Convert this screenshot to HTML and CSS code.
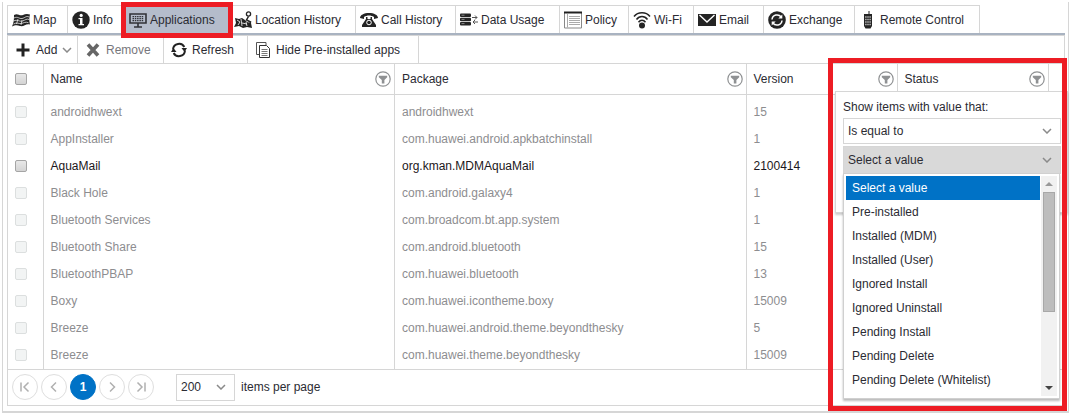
FILE: index.html
```html
<!DOCTYPE html>
<html lang="en">
<head>
<meta charset="utf-8">
<title>Applications</title>
<link rel="stylesheet" href="styles.css">
</head>
<body>
<svg class="sprite" aria-hidden="true">
  <symbol id="chevron" viewBox="0 0 10 6"><path d="M1 1l4 4 4-4" fill="none" stroke="currentColor" stroke-width="1.5"/></symbol>
  <symbol id="filter" viewBox="0 0 16 16"><circle cx="8" cy="8" r="7.2" fill="#fff" stroke="#8f9193" stroke-width="1.2"/><path d="M3.8 4.8h8.4v1.4L9.4 9v3.4H6.8V9l-3-2.8z" fill="#8f9193"/></symbol>
</svg>
<main class="panel">
  <nav class="tabs" aria-label="Device sections">
    <button class="tab"><svg class="icon" viewBox="0 0 18 18"><path d="M2 4c4-2.500 5 1.500 9 0 2-1 4-1.500 7-.5-1 3-1 6 0 10-4-1.500-6 2.500-10 1.500-3-1-5-1-8 .5 2-4 2-8 2-11.500z" fill="#242424"/><path d="M2 7c4-2 5 1 8 .5s4-3 7-1.500M1.500 10c4-2 6 1 9 0s4-2.500 6.500-1.500M1.500 13c3-2 6 0 8-.5s4-2 7-.8M6 8l-1.500 5M10 9l-1 5" fill="none" stroke="#fff" stroke-width=".7"/></svg>Map</button>
    <button class="tab"><svg class="icon" viewBox="0 0 18 18"><circle cx="9" cy="9" r="8.7" fill="#242424"/><circle cx="9.2" cy="4.4" r="1.6" fill="#fff"/><path d="M6.5 7h4v6H12v1.3H6.5V13H8V8.200H6.500z" fill="#fff"/></svg>Info</button>
    <button class="tab tab-active" aria-current="page"><svg class="icon" viewBox="0 0 18 18"><path d="M1 3h16v9H1zM9 12v4M5 16h8" fill="none" stroke="#303238" stroke-width="1.6"/><path d="M3.500 5.700h11M3.500 7.700h11M3.500 9.700h11" stroke="#303238" stroke-width="1.300" stroke-dasharray="1.500 .8"/></svg>Applications<span class="mark mark-tab"></span></button>
    <button class="tab"><svg class="icon" viewBox="0 0 18 18"><path d="M1 7l4 1 3-1 3 2 2 2 4 1 1 5-5-1-4 1-4-2-5 1 2-4z" fill="#242424"/><path d="M3 9l3 2-2 3M7 8l1 7M8 12l5 1M12 11l1 4" fill="none" stroke="#fff" stroke-width=".8"/><path d="M14.500 5.500L12.500 9l4 2-1 3" fill="none" stroke="#242424" stroke-width="1.500"/><circle cx="14.500" cy="3" r="2.100" fill="#fff" stroke="#242424" stroke-width="1.300"/></svg>Location History</button>
    <button class="tab"><svg class="icon" viewBox="0 0 18 18"><path d="M0 7c0-3 4-5 9-5s9 2 9 5l-4 1V6C11 4 7 4 4 6v2zM6 6h1.500v2h3V6H12v2l4 6v2H2v-2l4-6z" fill="#242424"/><circle cx="9" cy="11.500" r="2.300" fill="none" stroke="#fff"/></svg>Call History</button>
    <button class="tab"><svg class="icon" viewBox="0 0 18 18"><g fill="#242424"><rect y="2.500" width="11" height="3.500" rx="1"/><rect y="6.700" width="11" height="3.500" rx="1"/><rect y="10.900" width="11" height="3.500" rx="1"/></g><path d="M1.500 4.200h3m-3 4.200h3m-3 4.200h3" stroke="#888"/><path d="M12 6.500h5M15 4.500l2 2-2 2M18 11h-5M15 9l-2 2 2 2" fill="none" stroke="#555"/></svg>Data Usage</button>
    <button class="tab"><svg class="icon" viewBox="0 0 18 18"><path d="M.5 2v15h17V2" fill="#fff" stroke="#888"/><path d="M0 1.500h18" stroke="#202020" stroke-width="2"/><path d="M3.500 3v13.500M5 5.500h11M5 7.500h11M5 9.500h11M5 11.500h11M5 13.500h11" stroke="#aaa"/></svg>Policy</button>
    <button class="tab"><svg class="icon" viewBox="0 0 18 18"><path d="M1 5.500c4-5 12-5 16 0M3.500 8.500c3-4 8-4 11 0M5.500 11.300c2-2.600 5-2.600 7 0" fill="none" stroke="#242424" stroke-width="1.500"/><circle cx="9" cy="14.500" r="3" fill="#242424"/></svg>Wi-Fi</button>
    <button class="tab"><svg class="icon" viewBox="0 0 18 18"><path d="M0 3h18v12H0z" fill="#242424"/><path d="M1.500 4L9 11l7.500-7" fill="none" stroke="#fff" stroke-width="1.400"/></svg>Email</button>
    <button class="tab"><svg class="icon" viewBox="0 0 18 18"><circle cx="9" cy="9" r="8.800" fill="#242424"/><path d="M4 8.500c.5-5 6.500-6 9.200-2.500M14 9.500c-.5 5-6.500 6-9.200 2.500" fill="none" stroke="#fff" stroke-width="1.500"/><path d="M14.300 3.500v4h-4zM3.700 14.500v-4h4z" fill="#fff"/></svg>Exchange</button>
    <button class="tab"><svg class="icon" viewBox="0 0 18 18"><path d="M9.500 0h1v3h2.500v12l-1.500 2.500h-5L5 15V3h4.500z" fill="#242424"/><path d="M6.300 6h5.400M6.300 8.500h5.400M6.300 11h5.400M6.300 13.500h5.400" stroke="#ddd" stroke-width="1.300" stroke-dasharray="1.200 .9"/></svg>Remote Control</button>
  </nav>

  <section class="grid">
    <div class="toolbar">
      <button class="tool"><svg class="tool-icon" viewBox="0 0 16 16"><path d="M8 1.500v13M1.500 8h13" stroke="#222" stroke-width="3"/></svg>Add<svg class="chevron"><use href="#chevron"/></svg></button>
      <button class="tool" disabled><svg class="tool-icon" viewBox="0 0 16 16"><path d="M3 2.500l10 11M13 2.500l-10 11" stroke="#666" stroke-width="3.600"/></svg>Remove</button>
      <button class="tool"><svg class="tool-icon" viewBox="0 0 16 16"><path d="M2 7.500C2.500 1 11 0 13.300 5M14 8.500C13.500 15 5 16 2.700 11" fill="none" stroke="#222" stroke-width="2"/><path d="M16 6h-5.500l3 4zM0 10h5.500l-3-4z" fill="#222"/></svg>Refresh</button>
      <button class="tool"><svg class="tool-icon" viewBox="0 0 16 16"><path d="M11 3V.5H1.500v12H4" fill="#fff" stroke="#555"/><path d="M4.500 3.500h7l3 3v9h-10z" fill="#fff" stroke="#333"/><path d="M6.500 7.500h6M6.500 9.500h6M6.500 11.500h6M6.500 13.500h6" stroke="#777"/></svg>Hide Pre-installed apps</button>
    </div>

    <table class="apps">
      <colgroup><col class="col-check"><col><col><col class="col-short"><col class="col-short"><col class="col-end"></colgroup>
      <thead>
        <tr>
          <th><input type="checkbox" aria-label="Select all"></th>
          <th><div class="head">Name<button class="filter" aria-label="Filter name"><svg><use href="#filter"/></svg></button></div></th>
          <th><div class="head">Package<button class="filter" aria-label="Filter package"><svg><use href="#filter"/></svg></button></div></th>
          <th><div class="head">Version<button class="filter" aria-label="Filter version"><svg><use href="#filter"/></svg></button></div></th>
          <th><div class="head">Status<button class="filter" aria-label="Filter status"><svg><use href="#filter"/></svg></button></div></th>
          <th></th>
        </tr>
      </thead>
      <tbody>
        <tr class="spacer"><td></td><td></td><td></td><td></td><td></td><td></td></tr>
        <tr><td><input type="checkbox" disabled aria-label="androidhwext"></td><td>androidhwext</td><td>androidhwext</td><td>15</td><td></td><td></td></tr>
        <tr><td><input type="checkbox" disabled aria-label="AppInstaller"></td><td>AppInstaller</td><td>com.huawei.android.apkbatchinstall</td><td>1</td><td></td><td></td></tr>
        <tr class="enabled"><td><input type="checkbox" aria-label="AquaMail"></td><td>AquaMail</td><td>org.kman.MDMAquaMail</td><td>2100414</td><td></td><td></td></tr>
        <tr><td><input type="checkbox" disabled aria-label="Black Hole"></td><td>Black Hole</td><td>com.android.galaxy4</td><td>1</td><td></td><td></td></tr>
        <tr><td><input type="checkbox" disabled aria-label="Bluetooth Services"></td><td>Bluetooth Services</td><td>com.broadcom.bt.app.system</td><td>1</td><td></td><td></td></tr>
        <tr><td><input type="checkbox" disabled aria-label="Bluetooth Share"></td><td>Bluetooth Share</td><td>com.android.bluetooth</td><td>15</td><td></td><td></td></tr>
        <tr><td><input type="checkbox" disabled aria-label="BluetoothPBAP"></td><td>BluetoothPBAP</td><td>com.huawei.bluetooth</td><td>13</td><td></td><td></td></tr>
        <tr><td><input type="checkbox" disabled aria-label="Boxy"></td><td>Boxy</td><td>com.huawei.icontheme.boxy</td><td>15009</td><td></td><td></td></tr>
        <tr><td><input type="checkbox" disabled aria-label="Breeze"></td><td>Breeze</td><td>com.huawei.android.theme.beyondthesky</td><td>5</td><td></td><td></td></tr>
        <tr><td><input type="checkbox" disabled aria-label="Breeze theme"></td><td>Breeze</td><td>com.huawei.theme.beyondthesky</td><td>15009</td><td></td><td></td></tr>
      </tbody>
    </table>

    <div class="pager">
      <button class="page" aria-label="First page"><svg viewBox="0 0 12 12"><path d="M2 1.500v9M9.500 1.500L5 6l4.500 4.500"/></svg></button>
      <button class="page" aria-label="Previous page"><svg viewBox="0 0 12 12"><path d="M8 1.500L3.500 6 8 10.500"/></svg></button>
      <button class="page page-current" aria-current="page">1</button>
      <button class="page" aria-label="Next page"><svg viewBox="0 0 12 12"><path d="M4 1.500L8.500 6 4 10.500"/></svg></button>
      <button class="page" aria-label="Last page"><svg viewBox="0 0 12 12"><path d="M2.500 1.500L7 6l-4.500 4.500M10 1.500v9"/></svg></button>
      <div class="picker picker-size"><select id="page-size"><option>200</option></select><svg class="chevron"><use href="#chevron"/></svg></div>
      <label for="page-size">items per page</label>
    </div>

    <form class="popup" aria-label="Status filter">
      <label class="popup-label" for="operator">Show items with value that:</label>
      <div class="picker"><select id="operator"><option>Is equal to</option></select><svg class="chevron"><use href="#chevron"/></svg></div>
      <div class="picker picker-open"><select aria-label="Value"><option>Select a value</option></select><svg class="chevron"><use href="#chevron"/></svg>
        <div class="menu">
          <ul class="options" role="listbox" aria-label="Values">
            <li class="option option-active" role="option" aria-selected="true">Select a value</li>
            <li class="option" role="option">Pre-installed</li>
            <li class="option" role="option">Installed (MDM)</li>
            <li class="option" role="option">Installed (User)</li>
            <li class="option" role="option">Ignored Install</li>
            <li class="option" role="option">Ignored Uninstall</li>
            <li class="option" role="option">Pending Install</li>
            <li class="option" role="option">Pending Delete</li>
            <li class="option" role="option">Pending Delete (Whitelist)</li>
          </ul>
          <div class="scroll"><svg class="arrow" viewBox="0 0 8 4"><path d="M0 4l4-4 4 4z" fill="#999"/></svg><div class="track"><div class="thumb"></div></div><svg class="arrow" viewBox="0 0 8 4"><path d="M0 0l4 4 4-4z" fill="#444"/></svg></div>
        </div>
      </div>
    </form>
    <span class="mark mark-filter"></span>
  </section>
</main>
</body>
</html>
```
FILE: styles.css
```css
* { box-sizing: border-box; }
body { margin: 0; padding: 2px; background: #fff; color: #2b2b33; font: 12px/16px "Liberation Sans", Arial, sans-serif; }
button, select, input { font: inherit; color: inherit; margin: 0; }
button { display: flex; align-items: center; padding: 0; border: 0; background: none; white-space: nowrap; }
svg { display: block; flex: none; }
.sprite { position: absolute; width: 0; height: 0; }

.panel { padding: 3px 3px 5px 4px; border: 1px solid #d6d6d6; border-top: 0; border-bottom: 2px solid #d6d6d6; }

.tabs { display: grid; grid-template-columns: 60px 57px 105px 126px 100px 104px 69px 65px 70px 91px 126px; justify-content: start; border-bottom: 2px solid #a9b3c1; }
.tab { position: relative; height: 28px; gap: 3px; padding-left: 4px; border: 1px solid #d6d6d6; border-width: 1px 0 0 1px; }
.tab:last-child { border-right-width: 1px; }
.tab-active { z-index: 1; background: #b4bccb; }
.icon { width: 18px; height: 18px; }

.mark { position: absolute; border: 5px solid #ed1c24; pointer-events: none; }
.mark-tab { inset: -4px -4px -5px; }
.mark-filter { inset: 22px -3px -6px auto; width: 239px; }

.grid { position: relative; border: 1px solid #d6d6d6; }
.toolbar { display: grid; grid-template-columns: 70px 86px 84px 171px; height: 27px; }
.tool { gap: 5px; padding-left: 7px; border-right: 1px solid #d6d6d6; }
.tool:disabled { color: #77777c; }
.tool-icon { width: 16px; height: 16px; }
.chevron { width: 10px; height: 6px; color: #8a8a8a; }

.apps { width: 100%; table-layout: fixed; border-collapse: collapse; color: #8d8d90; }
.col-check { width: 35px; }
.col-short { width: 151px; }
.col-end { width: 16px; }
.apps th, .apps td { height: 27px; padding: 0 7px; border-left: 1px solid #d6d6d6; text-align: left; font-weight: 400; white-space: nowrap; }
.apps th { height: 31px; border-top: 1px solid #d6d6d6; border-bottom: 1px solid #d6d6d6; color: #2b2b33; }
.apps th:first-child, .apps td:first-child { border-left: 0; }
.apps .spacer td { height: 4px; }
.enabled { color: #1c1720; }
.head { display: flex; align-items: center; justify-content: space-between; }
.filter svg { width: 16px; height: 16px; margin-right: -4px; }
input[type="checkbox"] { display: block; appearance: none; width: 12px; height: 12px; border: 1px solid #a5a5a5; border-radius: 2px; background: linear-gradient(#e8e8e8, #d4d4d4); }
input[type="checkbox"]:disabled { border-color: #dcdfdf; background: #f2f4f4; }

.pager { display: flex; align-items: center; gap: 3px; height: 36px; padding-left: 4px; border-top: 1px solid #d6d6d6; }
.page { justify-content: center; width: 26px; height: 26px; border: 1px solid #dedede; border-radius: 50%; }
.page svg { width: 12px; height: 12px; fill: none; stroke: #b0b0b0; stroke-width: 1.5; }
.page-current { border-color: #0072c6; background: #0072c6; color: #fff; font-weight: 700; }

.picker { position: relative; display: grid; grid-template-columns: 1fr auto; align-items: center; height: 26px; border: 1px solid #d6d6d6; background: #fff; }
.picker select { grid-area: 1 / 1 / 2 / 3; appearance: none; height: 100%; padding: 0 4px; border: 0; background: none; }
.picker > .chevron { grid-area: 1 / 2; margin-right: 8px; pointer-events: none; }
.picker-size { width: 59px; height: 27px; margin: 0 3px 0 19px; }

.popup { position: absolute; top: 55px; right: -4px; width: 233px; height: 122px; padding: 7px 6px 0 7px; border: 1px solid #d6d6d6; background: #fff; box-shadow: 0 2px 2px #0003; }
.popup-label { display: block; margin-bottom: 3px; }
.popup .picker { margin-bottom: 2px; }
.popup .picker-open { height: 28px; background: #d9d9d9; }
.menu { position: absolute; top: 100%; left: -1px; right: 0; display: flex; padding: 2px; border: 1px solid #d0d0d0; background: #fff; box-shadow: 0 2px 2px #0004; }
.options { flex: 1; margin: 0; padding: 0 0 4px; list-style: none; }
.option { padding: 4px 6px; white-space: nowrap; }
.option-active { background: #0072c6; color: #fff; }
.scroll { display: flex; flex-direction: column; align-items: center; gap: 6px; width: 16px; margin-left: 1px; padding: 6px 2px; background: #f1f1f1; }
.arrow { width: 8px; height: 4px; }
.track { flex: 1; width: 100%; }
.thumb { height: 64%; border: 1px solid #a8a8a8; background: #bdbdbd; }
```
